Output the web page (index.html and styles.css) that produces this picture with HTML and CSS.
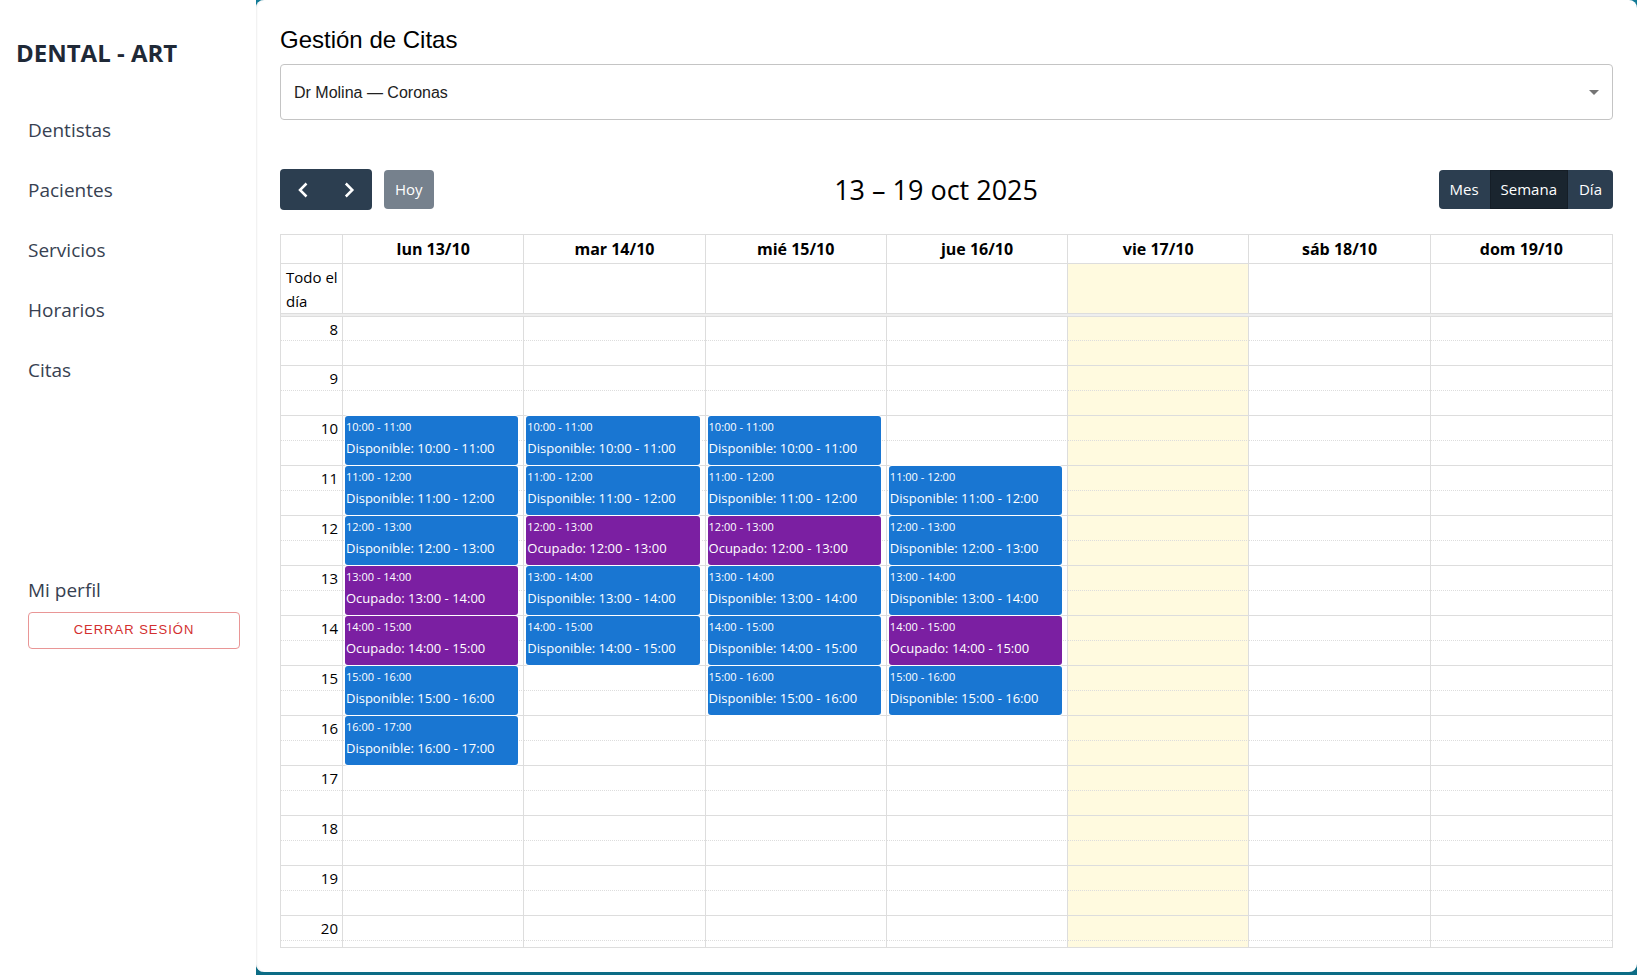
FILE: index.html
```html
<!DOCTYPE html>
<html lang="es">
<head>
<meta charset="utf-8">
<title>Dental - Art</title>
<link rel="stylesheet" href="styles.css">
</head>
<body>
<div class="layout">
  <aside class="sidebar">
    <div class="brand">DENTAL - ART</div>
    <nav class="menu">
      <a class="menu-link" href="#">Dentistas</a>
      <a class="menu-link" href="#">Pacientes</a>
      <a class="menu-link" href="#">Servicios</a>
      <a class="menu-link" href="#">Horarios</a>
      <a class="menu-link" href="#">Citas</a>
    </nav>
    <div class="account">
      <a class="account-link" href="#">Mi perfil</a>
      <button class="logout" type="button">CERRAR SESIÓN</button>
    </div>
  </aside>
  <main class="content">
    <h1 class="heading">Gestión de Citas</h1>
    <div class="picker">
      <select class="picker-select" aria-label="Dentista">
        <option>Dr Molina — Coronas</option>
      </select>
      <svg class="picker-arrow" viewBox="0 0 24 24" aria-hidden="true"><path d="M7 10l5 5 5-5z"/></svg>
    </div>
    <div class="toolbar">
      <div class="toolbar-group">
        <div class="button-group">
          <button class="btn btn-icon" type="button" aria-label="Anterior"><svg viewBox="0 0 24 24"><path d="M15.500 5.500L9 12l6.500 6.500"/></svg></button>
          <button class="btn btn-icon" type="button" aria-label="Siguiente"><svg viewBox="0 0 24 24"><path d="M8.800 5.500l6.500 6.500-6.500 6.500"/></svg></button>
        </div>
        <button class="btn btn-today" type="button" disabled>Hoy</button>
      </div>
      <h2 class="range">13 – 19 oct 2025</h2>
      <div class="button-group">
        <button class="btn" type="button">Mes</button>
        <button class="btn btn-active" type="button" aria-pressed="true">Semana</button>
        <button class="btn" type="button">Día</button>
      </div>
    </div>
    <div class="calendar">
      <table class="week">
        <colgroup><col class="axis-col"><col span="7"></colgroup>
        <thead>
          <tr class="days"><td></td><th scope="col">lun 13/10</th><th scope="col">mar 14/10</th><th scope="col">mié 15/10</th><th scope="col">jue 16/10</th><th scope="col">vie 17/10</th><th scope="col">sáb 18/10</th><th scope="col">dom 19/10</th></tr>
          <tr class="all-day"><th scope="row">Todo el día</th><td></td><td></td><td></td><td></td><td class="today"></td><td></td><td></td></tr>
          <tr class="divider"><td colspan="8"></td></tr>
        </thead>
        <tbody>
          <tr class="hour first"><th scope="row">8</th><td></td><td></td><td></td><td></td><td class="today"></td><td></td><td></td></tr>
          <tr class="hour"><th scope="row">9</th><td></td><td></td><td></td><td></td><td class="today"></td><td></td><td></td></tr>
          <tr class="hour"><th scope="row">10</th>
            <td><div class="event"><span class="time">10:00 - 11:00</span><span>Disponible: 10:00 - 11:00</span></div></td>
            <td><div class="event"><span class="time">10:00 - 11:00</span><span>Disponible: 10:00 - 11:00</span></div></td>
            <td><div class="event"><span class="time">10:00 - 11:00</span><span>Disponible: 10:00 - 11:00</span></div></td>
            <td></td><td class="today"></td><td></td><td></td></tr>
          <tr class="hour"><th scope="row">11</th>
            <td><div class="event"><span class="time">11:00 - 12:00</span><span>Disponible: 11:00 - 12:00</span></div></td>
            <td><div class="event"><span class="time">11:00 - 12:00</span><span>Disponible: 11:00 - 12:00</span></div></td>
            <td><div class="event"><span class="time">11:00 - 12:00</span><span>Disponible: 11:00 - 12:00</span></div></td>
            <td><div class="event"><span class="time">11:00 - 12:00</span><span>Disponible: 11:00 - 12:00</span></div></td>
            <td class="today"></td><td></td><td></td></tr>
          <tr class="hour"><th scope="row">12</th>
            <td><div class="event"><span class="time">12:00 - 13:00</span><span>Disponible: 12:00 - 13:00</span></div></td>
            <td><div class="event busy"><span class="time">12:00 - 13:00</span><span>Ocupado: 12:00 - 13:00</span></div></td>
            <td><div class="event busy"><span class="time">12:00 - 13:00</span><span>Ocupado: 12:00 - 13:00</span></div></td>
            <td><div class="event"><span class="time">12:00 - 13:00</span><span>Disponible: 12:00 - 13:00</span></div></td>
            <td class="today"></td><td></td><td></td></tr>
          <tr class="hour"><th scope="row">13</th>
            <td><div class="event busy"><span class="time">13:00 - 14:00</span><span>Ocupado: 13:00 - 14:00</span></div></td>
            <td><div class="event"><span class="time">13:00 - 14:00</span><span>Disponible: 13:00 - 14:00</span></div></td>
            <td><div class="event"><span class="time">13:00 - 14:00</span><span>Disponible: 13:00 - 14:00</span></div></td>
            <td><div class="event"><span class="time">13:00 - 14:00</span><span>Disponible: 13:00 - 14:00</span></div></td>
            <td class="today"></td><td></td><td></td></tr>
          <tr class="hour"><th scope="row">14</th>
            <td><div class="event busy"><span class="time">14:00 - 15:00</span><span>Ocupado: 14:00 - 15:00</span></div></td>
            <td><div class="event"><span class="time">14:00 - 15:00</span><span>Disponible: 14:00 - 15:00</span></div></td>
            <td><div class="event"><span class="time">14:00 - 15:00</span><span>Disponible: 14:00 - 15:00</span></div></td>
            <td><div class="event busy"><span class="time">14:00 - 15:00</span><span>Ocupado: 14:00 - 15:00</span></div></td>
            <td class="today"></td><td></td><td></td></tr>
          <tr class="hour"><th scope="row">15</th>
            <td><div class="event"><span class="time">15:00 - 16:00</span><span>Disponible: 15:00 - 16:00</span></div></td>
            <td></td>
            <td><div class="event"><span class="time">15:00 - 16:00</span><span>Disponible: 15:00 - 16:00</span></div></td>
            <td><div class="event"><span class="time">15:00 - 16:00</span><span>Disponible: 15:00 - 16:00</span></div></td>
            <td class="today"></td><td></td><td></td></tr>
          <tr class="hour"><th scope="row">16</th>
            <td><div class="event"><span class="time">16:00 - 17:00</span><span>Disponible: 16:00 - 17:00</span></div></td>
            <td></td><td></td><td></td><td class="today"></td><td></td><td></td></tr>
          <tr class="hour"><th scope="row">17</th><td></td><td></td><td></td><td></td><td class="today"></td><td></td><td></td></tr>
          <tr class="hour"><th scope="row">18</th><td></td><td></td><td></td><td></td><td class="today"></td><td></td><td></td></tr>
          <tr class="hour"><th scope="row">19</th><td></td><td></td><td></td><td></td><td class="today"></td><td></td><td></td></tr>
          <tr class="hour"><th scope="row">20</th><td></td><td></td><td></td><td></td><td class="today"></td><td></td><td></td></tr>
        </tbody>
      </table>
    </div>
  </main>
</div>
</body>
</html>
```

FILE: styles.css
```css
* {
  box-sizing: border-box;
}

body {
  margin: 0;
  background: linear-gradient(#117a96, #0c6c85);
  font-family: "Open Sans", "Noto Sans", sans-serif;
  font-size: 15px;
  color: #000;
}

.layout {
  display: grid;
  grid-template-columns: 256px minmax(0, 1fr);
  grid-template-rows: minmax(0, 1fr);
  height: 100vh;
}

.sidebar {
  display: flex;
  flex-direction: column;
  padding: 36px 16px;
  background: #fff;
}

.brand {
  font-size: 24px;
  font-weight: 700;
  line-height: 34px;
  color: #1f2937;
}

.menu {
  display: flex;
  flex-direction: column;
  gap: 16px;
  padding: 38px 12px 0;
}

.menu-link,
.account-link {
  font-size: 19px;
  line-height: 44px;
  color: #374151;
  text-decoration: none;
}

.account {
  display: flex;
  flex-direction: column;
  margin-top: 176px;
  padding-left: 12px;
}

.logout {
  height: 37px;
  padding: 0 0 2px;
  border: 1px solid #e99696;
  border-radius: 4px;
  background: #fff;
  font-family: "Liberation Sans", Arial, sans-serif;
  font-size: 13px;
  letter-spacing: 1px;
  color: #d32f2f;
}

.content {
  display: flex;
  flex-direction: column;
  margin-bottom: 3px;
  padding: 24px;
  border-radius: 8px;
  background: #fff;
  box-shadow: inset 2px 0 2px -1px #eee;
}

.heading {
  margin: 0 0 8px;
  font-family: "Liberation Sans", Arial, sans-serif;
  font-size: 24px;
  font-weight: 400;
  line-height: 32px;
}

.picker {
  position: relative;
}

.picker-select {
  display: block;
  width: 100%;
  height: 56px;
  padding: 0 32px 0 13px;
  border: 1px solid #c4c4c4;
  border-radius: 4px;
  background: #fff;
  appearance: none;
  font-family: "Liberation Sans", Arial, sans-serif;
  font-size: 16px;
  color: #212121;
}

.picker-arrow {
  position: absolute;
  top: 16px;
  right: 7px;
  width: 24px;
  height: 24px;
  fill: #757575;
  pointer-events: none;
}

.toolbar {
  display: flex;
  align-items: center;
  justify-content: space-between;
  margin: 49px 0 24px;
}

.toolbar-group {
  display: flex;
  align-items: center;
  gap: 12px;
}

.button-group {
  display: flex;
  border-radius: 4px;
  overflow: hidden;
}

.btn {
  height: 39px;
  padding: 0 11px 2px;
  border: 0;
  background: #2c3e50;
  font-family: inherit;
  font-size: 15px;
  color: #fff;
}

.btn-icon {
  display: flex;
  align-items: center;
  height: 41px;
  padding: 0 11px;
}

.btn-icon svg {
  width: 24px;
  height: 24px;
  fill: none;
  stroke: #fff;
  stroke-width: 2.5;
}

.btn-active {
  padding: 0 10px 2px;
  border: 1px solid #151e27;
  background: #1a252f;
}

.btn-today {
  border-radius: 4px;
  background: #76818d;
}

.range {
  margin: 0;
  font-size: 27px;
  font-weight: 400;
  line-height: 41px;
}

.calendar {
  flex: 1;
  min-height: 0;
  overflow: hidden;
  border: 1px solid #ddd;
}

.week {
  width: 100%;
  table-layout: fixed;
  border-spacing: 0;
}

.axis-col {
  width: 62px;
}

.week th,
.week td {
  padding: 0;
  border: 0 solid #ddd;
  border-width: 0 1px 1px 0;
  vertical-align: top;
}

.week tr > :last-child {
  border-right-width: 0;
}

.week tbody th,
.all-day th {
  font-weight: 400;
}

.days {
  height: 29px;
  font-size: 16px;
  line-height: 28px;
}

.all-day {
  height: 50px;
  line-height: 24px;
}

.week .all-day th {
  padding: 1px 4px 0 5px;
  text-align: left;
}

.divider {
  height: 3px;
}

.divider td {
  background: #eee;
}

.hour {
  height: 50px;
  line-height: 24px;
}

.first {
  height: 49px;
}

.week .hour th {
  padding-right: 4px;
  text-align: right;
}

.week .hour td {
  padding: 0 5px 0 2px;
}

.week .today {
  background-color: #fffadf;
}

/* dotted half-hour line */
.hour th,
.hour td {
  background-image: linear-gradient(90deg, #ddd 50%, transparent 50%);
  background-position: left bottom 24px;
  background-repeat: repeat-x;
  background-size: 2px 1px;
}

.event {
  display: flex;
  flex-direction: column;
  height: 49px;
  padding: 0 1px;
  border-radius: 3px;
  background: #1976d2;
  box-shadow: 0 0 0 1px #fff;
  font-size: 13px;
  line-height: 20px;
  color: #fff;
  white-space: nowrap;
}

.busy {
  background: #7b1fa2;
}

.time {
  font-size: 11px;
  line-height: 22px;
}
```
